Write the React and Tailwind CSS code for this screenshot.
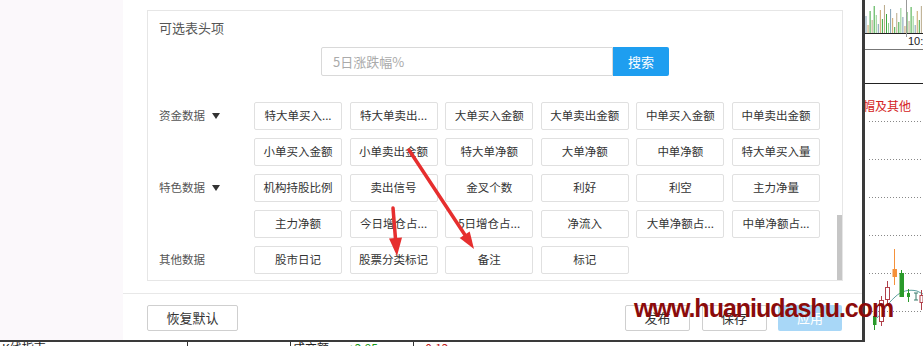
import React from 'react';

const rows = [
  { label: '资金数据', caret: true, items: ['特大单买入...', '特大单卖出...', '大单买入金额', '大单卖出金额', '中单买入金额', '中单卖出金额'] },
  { label: '', items: ['小单买入金额', '小单卖出金额', '特大单净额', '大单净额', '中单净额', '特大单买入量'] },
  { label: '特色数据', caret: true, items: ['机构持股比例', '卖出信号', '金叉个数', '利好', '利空', '主力净量'] },
  { label: '', items: ['主力净额', '今日增仓占...', '5日增仓占...', '净流入', '大单净额占...', '中单净额占...'] },
  { label: '其他数据', items: ['股市日记', '股票分类标记', '备注', '标记'] },
];

// volume bars at the top of the chart strip
const barColors = ['#3ea83e', '#c9a468', '#7f9fb4', '#8ccf8c', '#3ea83e', '#b8a888'];
const bars = Array.from({ length: 28 }, (_, i) => {
  const h = 6 + ((i * 37 + 11) % 23);
  return { x: 1 + i * 2.05, h, c: barColors[(i * 5 + 2) % barColors.length] };
});

const Chip = ({ text }) => (
  <div className="h-[28px] border border-[#e0e0e0] rounded-[2px] bg-white flex items-center justify-center text-[11.5px] text-[#333] whitespace-nowrap">
    {text}
  </div>
);

const Chart = () => (
  <svg width="58" height="342" className="block">
    {bars.map((b, i) => (
      <line key={i} x1={b.x} y1={33} x2={b.x} y2={33 - b.h} stroke={b.c} strokeWidth="1" />
    ))}
    <line x1="0" y1="33.5" x2="58" y2="33.5" stroke="#222" />
    <line x1="41.5" y1="0" x2="41.5" y2="37" stroke="#999" />
    <text x="43" y="45" fontSize="11" fill="#222" fontFamily="Liberation Sans, sans-serif">10:</text>
    <line x1="0" y1="49.5" x2="58" y2="49.5" stroke="#777" />
    <line x1="0" y1="83.5" x2="58" y2="83.5" stroke="#222" />
    <text x="-2" y="111" fontSize="12" fill="#d42222" fontFamily="Noto Sans CJK SC, sans-serif">帽及其他</text>
    {[121, 159, 197, 235, 273, 311].map((y) => (
      <line key={y} x1="4" y1={y + 0.5} x2="58" y2={y + 0.5} stroke="#888" strokeDasharray="1 2" />
    ))}
    <path d="M12 318 C18 312 22 304 30 297 C36 291 44 289 52 291 L58 294" fill="none" stroke="#5d9e9e" strokeWidth="1" />
    <line x1="9.5" y1="312" x2="9.5" y2="330" stroke="#2a9a2a" />
    <rect x="8" y="316" width="3.5" height="9" fill="#2a9a2a" />
    <line x1="16.5" y1="296" x2="16.5" y2="326" stroke="#b0404a" />
    <rect x="14.5" y="300.5" width="4" height="21" fill="#fff" stroke="#b0404a" />
    <line x1="22.5" y1="281" x2="22.5" y2="304" stroke="#b0404a" />
    <rect x="20.5" y="287.5" width="4" height="12" fill="#fff" stroke="#b0404a" />
    <line x1="29.5" y1="249" x2="29.5" y2="285" stroke="#f5913a" />
    <rect x="27.5" y="269" width="4.5" height="8" fill="#f5913a" />
    <line x1="36.5" y1="270" x2="36.5" y2="297" stroke="#2a9a2a" />
    <rect x="34.5" y="273" width="4.5" height="24" fill="#2a9a2a" />
    <line x1="43.5" y1="289" x2="43.5" y2="302" stroke="#2a9a2a" />
    <rect x="42" y="293" width="3" height="4" fill="#2a9a2a" />
    <path d="M49 293 H53 M51 293 V300 M49 300 H53" stroke="#3a7a6a" fill="none" />
    <line x1="56.5" y1="290" x2="56.5" y2="310" stroke="#b0404a" />
    <rect x="55" y="295.5" width="3" height="7" fill="#fff" stroke="#b0404a" />
  </svg>
);

export default function App() {
  return (
    <div className="relative w-[923px] h-[346px] overflow-hidden bg-white font-['Noto_Sans_CJK_SC',sans-serif]">
      <div className="flex h-[342px]">
        {/* dialog */}
        <div className="w-[865px] h-[342px] flex border-r-[3px] border-b-2 border-[#3a3a3a]">
          <div className="w-[123px] bg-[#fbf8fb]" />
          <div className="flex-1 bg-white flex flex-col">
            <div className="relative mt-[10px] ml-[24px] mr-[19px] h-[271px] border border-[#e6e6e6] px-[11px] pt-[7px]">
              <div className="text-[13px] leading-[20px] text-[#555]">可选表头项</div>
              <div className="mt-[9px] flex justify-center">
                <div className="w-[292px] h-[29px] border border-[#d9d9d9] rounded-l-[2px] flex items-center pl-[11px] text-[13px] text-[#aaa]">
                  5日涨跌幅%
                </div>
                <div className="w-[56px] h-[29px] bg-[#1e9ef0] rounded-r-[2px] flex items-center justify-center text-[13px] text-white">
                  搜索
                </div>
              </div>
              <div className="mt-[26px] flex flex-col gap-[8px]">
                {rows.map((r, i) => (
                  <div key={i} className="flex items-center">
                    <div className="w-[95px] flex items-center text-[11.5px] text-[#555]">
                      {r.label}
                      {r.caret && (
                        <span className="ml-[7px] w-0 h-0 border-l-[4px] border-r-[4px] border-t-[6px] border-l-transparent border-r-transparent border-t-[#333]" />
                      )}
                    </div>
                    <div className="grid grid-cols-[repeat(6,88px)] gap-x-[7.6px]">
                      {r.items.map((t) => (
                        <Chip key={t} text={t} />
                      ))}
                    </div>
                  </div>
                ))}
              </div>
              <div className="absolute right-0 top-[204px] w-[5px] h-[65px] bg-[#c6c6c6]" />
            </div>
            <div className="mt-[12px] border-t border-[#e8e8e8]" />
            <div className="flex justify-between items-start pt-[11px] pl-[24px] pr-[20px]">
              <div className="w-[91px] h-[26px] border border-[#cfcfcf] rounded-[2px] flex items-center justify-center text-[13px] text-[#333]">
                恢复默认
              </div>
              <div className="flex gap-[11.5px]">
                <div className="w-[65px] h-[26px] border border-[#cfcfcf] rounded-[2px] flex items-center justify-center text-[13px] text-[#333]">发布</div>
                <div className="w-[65px] h-[26px] border border-[#cfcfcf] rounded-[2px] flex items-center justify-center text-[13px] text-[#333]">保存</div>
                <div className="w-[64px] h-[26px] bg-[#a8d7f7] rounded-[2px] flex items-center justify-center text-[13px] text-white">应用</div>
              </div>
            </div>
          </div>
        </div>
        <Chart />
      </div>

      {/* table row peeking below the dialog */}
      <div className="h-[4px] overflow-hidden flex text-[12px] leading-[12px] text-[#222]">
        <div className="w-[187px] pl-[2px]">K线指南</div>
        <div className="w-[103px] border-l border-[#333]" />
        <div className="w-[58px] border-l border-[#333] pl-[2px]">成交额</div>
        <div className="w-[65px] text-[#1a9a1a]">+2.95</div>
        <div className="w-[8px] border-l border-[#333]" />
        <div className="text-[#c02020]">-0.12</div>
      </div>

      {/* red arrows */}
      <svg className="absolute left-0 top-0 pointer-events-none" width="923" height="346">
        <line x1="409" y1="150" x2="465" y2="235" stroke="#e62e2e" strokeWidth="3.5" strokeLinecap="round" />
        <polygon points="474,249 459.7,238.1 469.7,231.5" fill="#e62e2e" />
        <line x1="393" y1="208" x2="395.5" y2="239" stroke="#e62e2e" strokeWidth="3.5" strokeLinecap="round" />
        <polygon points="397,256 389,238.6 402,237.6" fill="#e62e2e" />
      </svg>

      {/* watermark */}
      <div className="absolute left-[634px] top-[296px] text-[25px] leading-none font-bold tracking-[-1px] text-[#8b0b0b] font-['Liberation_Sans',sans-serif] whitespace-nowrap">
        www.huaniudashu.com
      </div>
    </div>
  );
}
